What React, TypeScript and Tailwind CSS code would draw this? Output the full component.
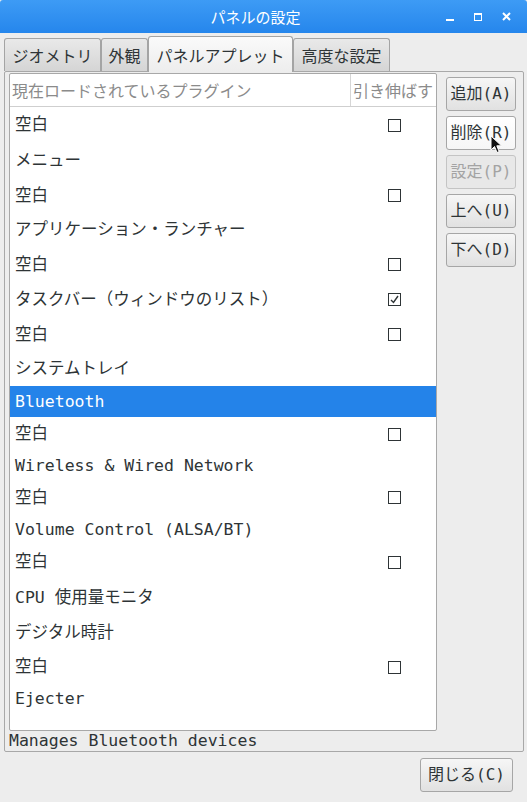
import React from "react";

type Row = { name: string; h: number; box?: "off" | "on"; sel?: boolean };

const ROWS: Row[] = [
  { name: "空白", h: 36, box: "off" },
  { name: "メニュー", h: 35 },
  { name: "空白", h: 35, box: "off" },
  { name: "アプリケーション・ランチャー", h: 34 },
  { name: "空白", h: 35, box: "off" },
  { name: "タスクバー（ウィンドウのリスト）", h: 35, box: "on" },
  { name: "空白", h: 35, box: "off" },
  { name: "システムトレイ", h: 34 },
  { name: "Bluetooth", h: 31, sel: true },
  { name: "空白", h: 34, box: "off" },
  { name: "Wireless & Wired Network", h: 30 },
  { name: "空白", h: 33, box: "off" },
  { name: "Volume Control (ALSA/BT)", h: 31 },
  { name: "空白", h: 34, box: "off" },
  { name: "CPU 使用量モニタ", h: 37 },
  { name: "デジタル時計", h: 34 },
  { name: "空白", h: 34, box: "off" },
  { name: "Ejecter", h: 30 },
];

const TABS = [
  { label: "ジオメトリ", w: "w-[97px]" },
  { label: "外観", w: "w-[47px]" },
  { label: "パネルアプレット", w: "w-[145px]", active: true },
  { label: "高度な設定", w: "w-[97px]" },
];

const BUTTONS = [
  { label: "追加(A)" },
  { label: "削除(R)", hover: true },
  { label: "設定(P)", disabled: true },
  { label: "上へ(U)" },
  { label: "下へ(D)" },
];

function CheckBox({ on }: { on: boolean }) {
  return (
    <div className="w-[13px] h-[13px] border border-[#2e3436] bg-white flex items-center justify-center">
      {on && (
        <svg width="11" height="11" viewBox="0 0 11 11">
          <path d="M2 6 L4.5 8.5 L9 2" fill="none" stroke="#2e3436" strokeWidth="1.4" />
        </svg>
      )}
    </div>
  );
}

function Cursor() {
  return (
    <svg className="absolute left-[490px] top-[135px] z-20" width="13" height="19" viewBox="0 0 13 19">
      <path d="M1 1 L1 15 L4.5 11.5 L7 17.5 L9.2 16.6 L6.8 10.8 L11.5 10.8 Z" fill="#111" stroke="#fff" strokeWidth="1" strokeLinejoin="round" />
    </svg>
  );
}

export default function App() {
  return (
    <div className="relative w-[527px] h-[802px] bg-[#ededed] flex flex-col overflow-hidden font-['DejaVu_Sans_Mono','Noto_Sans_CJK_JP',monospace] text-[#2e3436]">
      {/* title bar */}
      <div className="h-[33px] flex items-center bg-linear-to-b from-[#3d9bf5] to-[#2586ec] rounded-t-[3px]">
        <div className="flex-1" />
        <span className="text-white text-[15px] leading-none font-['Noto_Sans_CJK_JP',sans-serif]">パネルの設定</span>
        <div className="flex-1 flex justify-end items-center pr-[16px] gap-[20px]">
          <div className="w-[8px] h-[8px] flex items-end">
            <div className="w-[8px] h-[2px] bg-white" />
          </div>
          <div className="w-[8px] h-[8px] border border-white border-t-2" />
          <svg width="9" height="9" viewBox="0 0 9 9">
            <path d="M1 1 L8 8 M8 1 L1 8" stroke="white" strokeWidth="2" />
          </svg>
        </div>
      </div>

      <div className="flex-1 flex flex-col pl-[4px] pr-[3px] pt-[3px]">
        {/* tabs */}
        <div className="relative z-10 -mb-px flex items-end h-[36px] font-['Noto_Sans_CJK_JP',sans-serif]">
          {TABS.map((t) =>
            t.active ? (
              <div
                key={t.label}
                className={`${t.w} h-[36px] flex items-center justify-center border border-b-0 border-[#a4a4a4] rounded-t-[3px] bg-linear-to-b from-[#fafafa] to-[#ededed] text-[16px] leading-none`}
              >
                {t.label}
              </div>
            ) : (
              <div
                key={t.label}
                className={`${t.w} h-[33px] mb-px flex items-center justify-center border border-b-0 border-[#a4a4a4] rounded-t-[3px] bg-linear-to-b from-[#e9e9e9] to-[#d5d5d5] text-[16px] leading-none`}
              >
                {t.label}
              </div>
            )
          )}
        </div>

        {/* notebook page */}
        <div className="w-[520px] border border-[#a8a8a8] rounded-[2px] bg-[#ededed] pl-[4px] pt-[1px] flex flex-col">
          <div className="flex">
            {/* plugin list */}
            <div className="w-[428px] h-[658px] border border-[#a8a8a8] rounded-[2px] bg-white flex flex-col">
              <div className="h-[33px] flex border-b border-[#cfcfcf] text-[#8b8b8b] text-[16px] leading-none font-['Noto_Sans_CJK_JP',sans-serif]">
                <div className="w-[341px] flex items-center pl-[2px] border-r border-[#d6d6d6]">現在ロードされているプラグイン</div>
                <div className="flex-1 flex items-center pl-[2px]">引き伸ばす</div>
              </div>
              <div className="flex flex-col text-[16.5px] leading-none">
                {ROWS.map((r, i) => (
                  <div
                    key={i}
                    style={{ height: r.h }}
                    className={`flex items-center ${r.sel ? "bg-[#2483e9] text-white" : "text-[#2e3436]"}`}
                  >
                    <div className="w-[341px] pl-[5px] pt-px whitespace-pre">{r.name}</div>
                    <div className="flex-1 flex justify-center pl-[2px]">
                      {r.box && <CheckBox on={r.box === "on"} />}
                    </div>
                  </div>
                ))}
              </div>
            </div>

            {/* side buttons */}
            <div className="ml-[9px] mt-[4px] flex flex-col gap-[5px]">
              {BUTTONS.map((b) => (
                <div
                  key={b.label}
                  className={`w-[70px] h-[34px] flex items-center justify-center rounded-[3px] border text-[16px] leading-none ${
                    b.disabled
                      ? "border-[#c4c4c4] bg-[#e8e8e8] text-[#a3a3a3]"
                      : b.hover
                      ? "border-[#a6a6a6] bg-linear-to-b from-white to-[#f6f6f6]"
                      : "border-[#a6a6a6] bg-linear-to-b from-[#f6f6f6] to-[#e1e1e1]"
                  }`}
                >
                  {b.label}
                </div>
              ))}
            </div>
          </div>

          <div className="h-[20px] flex items-center text-[16.5px] leading-none text-[#2e3436]">
            Manages Bluetooth devices
          </div>
        </div>

        {/* bottom */}
        <div className="flex justify-end pr-[11px] pt-[6px]">
          <div className="w-[93px] h-[34px] flex items-center justify-center rounded-[3px] border border-[#a6a6a6] bg-linear-to-b from-[#f6f6f6] to-[#e1e1e1] text-[16px] leading-none">
            閉じる(C)
          </div>
        </div>
      </div>

      <Cursor />
    </div>
  );
}
